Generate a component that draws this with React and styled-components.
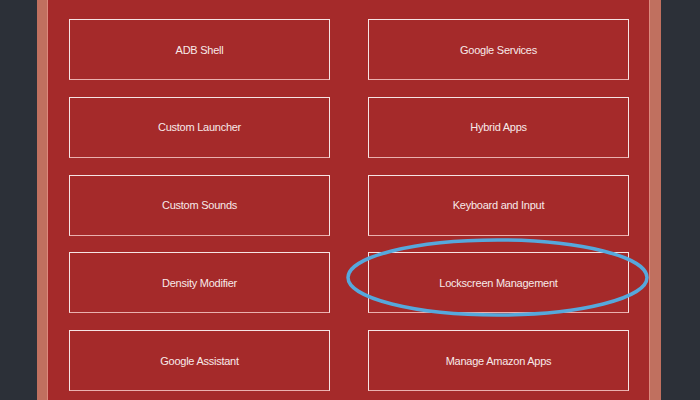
import React from 'react';
import styled, { createGlobalStyle } from 'styled-components';

const GlobalStyle = createGlobalStyle`
    html, body {
        margin: 0;
        padding: 0;
        background: #2c3038;
        overflow: hidden;
    }
`;

const Page = styled.div`
    width: 700px;
    height: 400px;
    background: #2c3038;
    padding-left: 37px;
    box-sizing: border-box;
    position: relative;
`;

const Frame = styled.div`
    width: 624px;
    height: 400px;
    background: #c0705f;
    padding: 0 11px 0 10px;
    box-sizing: border-box;
`;

const Panel = styled.div`
    height: 100%;
    background: #a52a2a;
    border-left: 1px solid #dc8a7e;
    border-right: 1px solid #dc8a7e;
    padding: 19px 20px 0 21px;
    box-sizing: border-box;
    display: grid;
    grid-template-columns: 261px 261px;
    grid-auto-rows: 61px;
    column-gap: 38px;
    row-gap: 16.75px;
    align-content: start;
`;

const Button = styled.button`
    background: #a52a2a;
    border: 1px solid #f6e4e4;
    border-bottom-color: #eab0ae;
    color: #f7e9e9;
    font-family: "Liberation Sans", Arial, sans-serif;
    font-size: 11px;
    letter-spacing: -0.25px;
    padding: 0;
    margin: 0;
    display: flex;
    align-items: center;
    justify-content: center;
    cursor: pointer;
`;

const Highlight = styled.svg`
    position: absolute;
    left: 0;
    top: 0;
    pointer-events: none;
`;

const items = [
    'ADB Shell', 'Google Services',
    'Custom Launcher', 'Hybrid Apps',
    'Custom Sounds', 'Keyboard and Input',
    'Density Modifier', 'Lockscreen Management',
    'Google Assistant', 'Manage Amazon Apps',
];

export default function App() {
    return (
        <>
            <GlobalStyle />
            <Page>
                <Frame>
                    <Panel>
                        {items.map((label) => (
                            <Button key={label}>{label}</Button>
                        ))}
                    </Panel>
                </Frame>
                <Highlight width="700" height="400">
                    <ellipse cx="497.5" cy="277.5" rx="149.5" ry="37.5" fill="none" stroke="#56a8dc" strokeWidth="3.5" />
                </Highlight>
            </Page>
        </>
    );
}
